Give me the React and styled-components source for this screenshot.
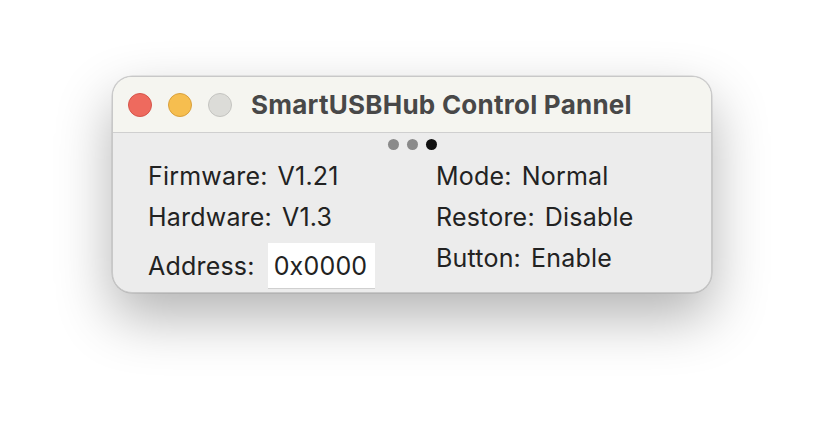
import React from 'react'
import styled, { createGlobalStyle } from 'styled-components'

const GlobalStyle = createGlobalStyle`
  html, body {
    margin: 0;
    padding: 0;
    background: #ffffff;
  }
  body {
    font-family: Inter, "Noto Sans", sans-serif;
  }
`

const Page = styled.div`
  width: 824px;
  height: 440px;
  display: flex;
  justify-content: center;
  align-items: flex-start;
  padding-top: 76px;
  box-sizing: border-box;
`

const Window = styled.div`
  width: 600px;
  height: 217px;
  border-radius: 20px;
  overflow: hidden;
  background: #ececec;
  border: 1px solid #c8c8c8;
  box-sizing: border-box;
  box-shadow: 0 24px 56px rgba(0, 0, 0, 0.3), 0 0 0 0.5px rgba(0, 0, 0, 0.15);
  display: flex;
  flex-direction: column;
`

const TitleBar = styled.div`
  height: 56px;
  flex: none;
  background: #f5f5f0;
  border-bottom: 1px solid #cfcfcf;
  display: flex;
  align-items: center;
  padding-left: 15px;
  box-sizing: border-box;
`

const Lights = styled.div`
  display: flex;
  gap: 16px;
  margin-right: 19px;
`

const Light = styled.span`
  width: 24px;
  height: 24px;
  border-radius: 50%;
  background: ${p => p.$color};
  border: 1px solid ${p => p.$edge};
  box-sizing: border-box;
`

const Title = styled.h1`
  margin: 0;
  font-size: 26px;
  font-weight: 700;
  color: #484848;
  letter-spacing: 0.25px;
`

const Body = styled.div`
  flex: 1;
  display: flex;
  flex-direction: column;
  padding: 6px 0 0 35px;
`

const Dots = styled.div`
  display: flex;
  justify-content: center;
  gap: 8px;
  padding-right: 35px;
`

const Dot = styled.span`
  width: 11px;
  height: 11px;
  border-radius: 50%;
  background: ${p => (p.$active ? '#111111' : '#8a8a8a')};
`

const Columns = styled.div`
  display: grid;
  grid-template-columns: 288px 1fr;
  margin-top: 5px;
`

const Column = styled.div`
  display: flex;
  flex-direction: column;
`

const Row = styled.div`
  height: 41px;
  display: flex;
  align-items: center;
  gap: 10px;
  font-size: 25px;
  letter-spacing: 0.2px;
  color: #222222;
`

const Label = styled.span``

const Value = styled.span``

const AddressRow = styled(Row)`
  height: auto;
  padding-top: 6px;
  gap: 13px;
`

const AddressField = styled.div`
  width: 107px;
  height: 46px;
  background: #ffffff;
  border-bottom: 1px solid #d0d0d0;
  display: flex;
  align-items: center;
  padding-left: 6px;
  font-size: 25px;
  letter-spacing: 0.2px;
  color: #222222;
  box-sizing: border-box;
`

export default function App() {
  return (
    <>
      <GlobalStyle />
      <Page>
        <Window>
          <TitleBar>
            <Lights>
              <Light $color="#ee6a5e" $edge="#d5544a" />
              <Light $color="#f6be4f" $edge="#d9a03c" />
              <Light $color="#dcdcd8" $edge="#c4c4c0" />
            </Lights>
            <Title>SmartUSBHub Control Pannel</Title>
          </TitleBar>
          <Body>
            <Dots>
              <Dot />
              <Dot />
              <Dot $active />
            </Dots>
            <Columns>
              <Column>
                <Row>
                  <Label>Firmware:</Label>
                  <Value>V1.21</Value>
                </Row>
                <Row>
                  <Label>Hardware:</Label>
                  <Value>V1.3</Value>
                </Row>
                <AddressRow>
                  <Label>Address:</Label>
                  <AddressField>0x0000</AddressField>
                </AddressRow>
              </Column>
              <Column>
                <Row>
                  <Label>Mode:</Label>
                  <Value>Normal</Value>
                </Row>
                <Row>
                  <Label>Restore:</Label>
                  <Value>Disable</Value>
                </Row>
                <Row>
                  <Label>Button:</Label>
                  <Value>Enable</Value>
                </Row>
              </Column>
            </Columns>
          </Body>
        </Window>
      </Page>
    </>
  )
}
